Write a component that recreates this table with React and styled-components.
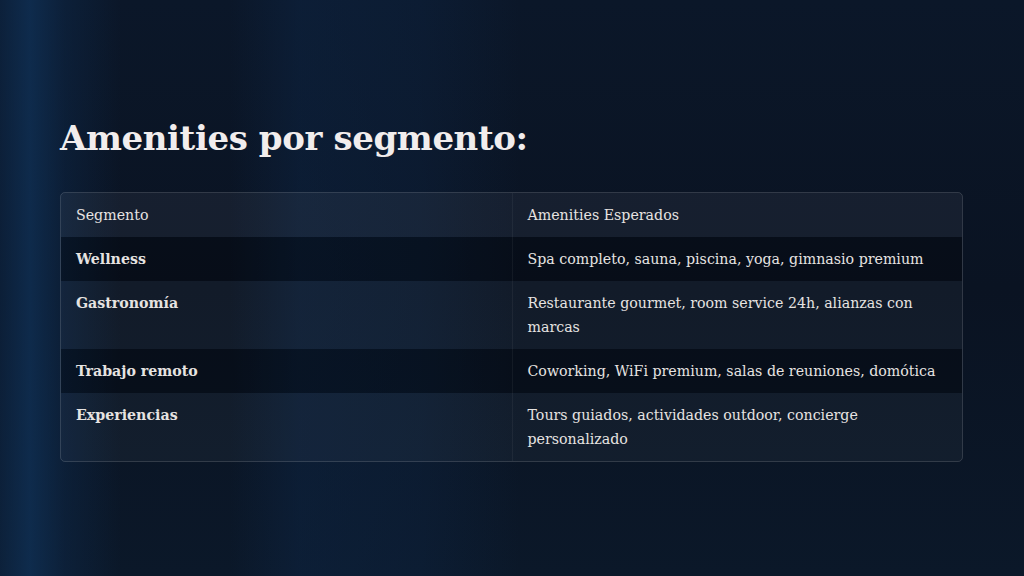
import React from "react";
import styled, { createGlobalStyle } from "styled-components";

const GlobalStyle = createGlobalStyle`
  html, body {
    margin: 0;
    padding: 0;
  }
  body {
    background: #0a1424;
    font-family: "DejaVu Serif", "Liberation Serif", serif;
  }
`;

const Slide = styled.main`
  box-sizing: border-box;
  width: 1024px;
  height: 576px;
  padding: 0 61px 0 60px;
  display: flex;
  flex-direction: column;
  justify-content: center;
  background:
    linear-gradient(90deg,
      rgba(14, 44, 80, 0.45) 0px,
      rgba(16, 52, 92, 0.7) 30px,
      rgba(14, 44, 80, 0.4) 65px,
      rgba(10, 22, 40, 0) 120px,
      rgba(12, 32, 60, 0) 230px,
      rgba(14, 40, 74, 0.4) 300px,
      rgba(14, 40, 74, 0.3) 420px,
      rgba(10, 22, 40, 0) 520px,
      rgba(10, 22, 40, 0) 1024px),
    linear-gradient(180deg, #0b1729 0%, #0a1322 50%, #0b1829 100%);
`;

const Title = styled.h1`
  margin: 0 0 30px;
  color: #f1eded;
  font-size: 34px;
  font-weight: 700;
  line-height: 48px;
  letter-spacing: -0.4px;
`;

const Table = styled.div`
  display: grid;
  grid-template-columns: 1fr 1fr;
  border: 1px solid rgba(255, 255, 255, 0.16);
  border-radius: 5px;
  overflow: hidden;
`;

const Cell = styled.div`
  padding: 10px 15px;
  font-size: 14.2px;
  line-height: 24px;
  color: #e6e3e1;
  font-weight: ${(p) => (p.$bold ? 700 : 400)};
  background: ${(p) =>
    p.$tone === "head"
      ? "rgba(255, 255, 255, 0.05)"
      : p.$tone === "dark"
      ? "rgba(0, 0, 0, 0.28)"
      : "rgba(255, 255, 255, 0.035)"};
  border-left: ${(p) => (p.$right ? "1px solid rgba(255, 255, 255, 0.05)" : "none")};
`;

const rows = [
  ["Wellness", "Spa completo, sauna, piscina, yoga, gimnasio premium"],
  ["Gastronomía", "Restaurante gourmet, room service 24h, alianzas con marcas"],
  ["Trabajo remoto", "Coworking, WiFi premium, salas de reuniones, domótica"],
  ["Experiencias", "Tours guiados, actividades outdoor, concierge personalizado"],
];

export default function App() {
  return (
    <>
      <GlobalStyle />
      <Slide>
        <Title>Amenities por segmento:</Title>
        <Table>
          <Cell $tone="head">Segmento</Cell>
          <Cell $tone="head" $right>Amenities Esperados</Cell>
          {rows.map(([seg, text], i) => {
            const tone = i % 2 === 0 ? "dark" : "light";
            return (
              <React.Fragment key={seg}>
                <Cell $tone={tone} $bold>{seg}</Cell>
                <Cell $tone={tone} $right>{text}</Cell>
              </React.Fragment>
            );
          })}
        </Table>
      </Slide>
    </>
  );
}
